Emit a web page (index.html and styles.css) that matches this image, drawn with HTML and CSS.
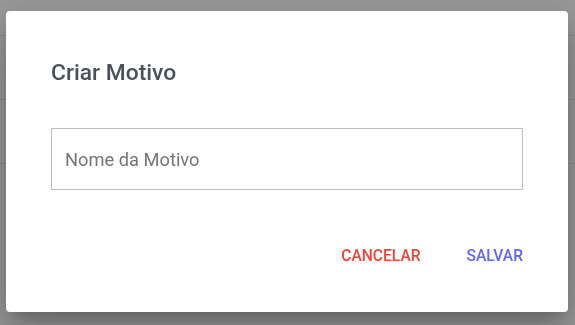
FILE: index.html
```html
<!DOCTYPE html>
<html lang="pt">
<head>
  <meta charset="UTF-8">
  <title>Criar Motivo</title>
  <link rel="stylesheet" href="styles.css">
</head>
<body>

  <div class="page">
    <div class="row first"></div>
    <div class="row"></div>
    <div class="row"></div>
  </div>

  <div class="overlay">
    <div class="dialog">
      <h2 class="title">Criar Motivo</h2>
      <input class="field" type="text" placeholder="Nome da Motivo">
      <div class="actions">
        <button class="btn cancel">Cancelar</button>
        <button class="btn save">Salvar</button>
      </div>
    </div>
  </div>

</body>
</html>
```

FILE: styles.css
```css
body {
  margin: 0;
  background: #999;
  font-family: Roboto, "Liberation Sans", sans-serif;
}

.page {
  height: 325px;
}

.row {
  height: 63px;
  border-bottom: 1px solid #8a8a8a;
}

.row.first {
  height: 35px;
}

.overlay {
  position: fixed;
  inset: 0;
  padding: 11px 7px 0 6px;
}

.dialog {
  background: #fff;
  border-radius: 4px;
  height: 301px;
  box-sizing: border-box;
  padding: 50px 45px 0 45px;
  box-shadow: 0 11px 15px -7px rgba(0,0,0,0.2), 0 24px 38px 3px rgba(0,0,0,0.14), 0 9px 46px 8px rgba(0,0,0,0.12);
}

.title {
  margin: 0;
  font-size: 22.8px;
  font-weight: 500;
  color: #4a5058;
  line-height: 24px;
}

.field {
  display: block;
  margin-top: 43px;
  width: 100%;
  height: 62px;
  box-sizing: border-box;
  border: 1px solid #bfbfbf;
  padding: 0 13px;
  font-family: inherit;
  font-size: 18.3px;
  color: #333;
  outline: none;
}

.field::placeholder {
  color: #757575;
}

.actions {
  display: flex;
  justify-content: flex-end;
  gap: 14px;
  margin-top: 48px;
  margin-right: -16px;
}

.btn {
  background: none;
  border: none;
  height: 36px;
  padding: 0 16px;
  font-family: inherit;
  font-size: 15.6px;
  font-weight: 500;
  text-transform: uppercase;
  cursor: pointer;
}

.cancel {
  color: #f44336;
}

.save {
  color: #5f65ff;
}
```
